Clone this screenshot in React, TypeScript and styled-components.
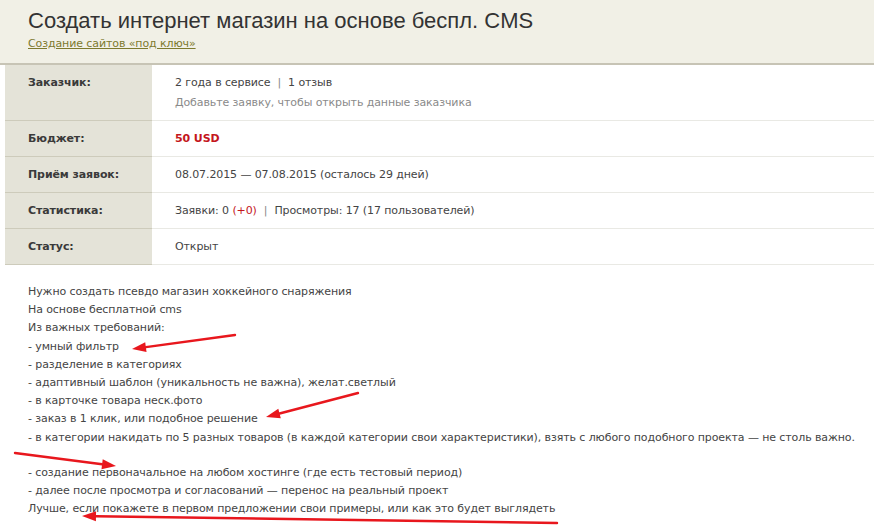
import React from "react";
import styled, { createGlobalStyle } from "styled-components";

const Global = createGlobalStyle`
  html, body { margin: 0; padding: 0; background: #ffffff; }
  body { font-family: "DejaVu Sans", Tahoma, sans-serif; font-size: 11px; letter-spacing: -0.1px; color: #444; }
`;

const Page = styled.div`
  position: relative;
  width: 874px;
  height: 530px;
  overflow: hidden;
  background: #ffffff;
`;

const Header = styled.header`
  background: #f1f0e6;
  border-bottom: 2px solid #c7c4b5;
  height: 65px;
  box-sizing: border-box;
  padding: 8px 28px 0;
`;

const Title = styled.h1`
  margin: 0;
  font-family: "Liberation Sans", Arial, sans-serif;
  font-weight: normal;
  font-size: 22px;
  line-height: 26px;
  letter-spacing: 0;
  color: #333;
`;

const CategoryLink = styled.a`
  display: inline-block;
  margin-top: 3px;
  color: #7d7a2e;
  text-decoration: underline;
  font-size: 11px;
  line-height: 14px;
`;

const Table = styled.div`
  margin-left: 5px;
  display: grid;
  grid-template-columns: 147px 1fr;
`;

const Label = styled.div<{ $h: number }>`
  height: ${(p) => p.$h}px;
  box-sizing: border-box;
  background: #e4e3d8;
  border-bottom: 1px solid #cdcbbb;
  padding: 10px 0 0 23px;
  font-weight: bold;
  color: #3a3a3a;
  line-height: 16px;
`;

const Value = styled.div<{ $h: number }>`
  height: ${(p) => p.$h}px;
  box-sizing: border-box;
  border-bottom: 1px solid #e9e9e4;
  padding: 8px 0 0 23px;
  line-height: 20px;
  color: #444;
`;

const Muted = styled.div`
  color: #8a8a8a;
`;

const Budget = styled.span`
  color: #c4161c;
  font-weight: bold;
`;

const Sep = styled.span`
  color: #888;
  margin: 0 7px;
`;

const Red = styled.span`
  color: #c4161c;
`;

const Description = styled.div`
  margin-left: 5px;
  padding: 18px 0 0 23px;
  line-height: 18.2px;
  color: #444;
`;

const Line = styled.div`
  white-space: pre;
  min-height: 18px;
`;

const Gap = styled.div`
  height: 17px;
`;

const Overlay = styled.svg`
  position: absolute;
  left: 0;
  top: 0;
  pointer-events: none;
`;

type ArrowProps = { x1: number; y1: number; x2: number; y2: number };

const Arrow = ({ x1, y1, x2, y2 }: ArrowProps) => {
  const ang = Math.atan2(y2 - y1, x2 - x1);
  const len = 14;
  const w = 5;
  const bx = x2 - Math.cos(ang) * len;
  const by = y2 - Math.sin(ang) * len;
  const px = -Math.sin(ang) * w;
  const py = Math.cos(ang) * w;
  return (
    <g>
      <line x1={x1} y1={y1} x2={bx} y2={by} stroke="#e8171d" strokeWidth={2.4} strokeLinecap="round" />
      <polygon points={`${x2},${y2} ${bx + px},${by + py} ${bx - px},${by - py}`} fill="#e8171d" />
    </g>
  );
};

const lines1 = [
  "Нужно создать псевдо магазин хоккейного снаряжения",
  "На основе бесплатной cms",
  "Из важных требований:",
  "- умный фильтр",
  "- разделение в категориях",
  "- адаптивный шаблон (уникальность не важна), желат.светлый",
  "- в карточке товара неск.фото",
  "- заказ в 1 клик, или подобное решение",
  "- в категории накидать по 5 разных товаров (в каждой категории свои характеристики), взять с любого подобного проекта — не столь важно.",
];

const lines2 = [
  "- создание первоначальное на любом хостинге (где есть тестовый период)",
  "- далее после просмотра и согласований — перенос на реальный проект",
  "Лучше, если покажете в первом предложении свои примеры, или как это будет выглядеть",
];

export default function App() {
  return (
    <Page>
      <Global />
      <Header>
        <Title>Создать интернет магазин на основе беспл. CMS</Title>
        <CategoryLink href="#">Создание сайтов «под ключ»</CategoryLink>
      </Header>
      <Table>
        <Label $h={56}>Заказчик:</Label>
        <Value $h={56}>
          <div>
            2 года в сервисе<Sep>|</Sep>1 отзыв
          </div>
          <Muted>Добавьте заявку, чтобы открыть данные заказчика</Muted>
        </Value>
        <Label $h={36}>Бюджет:</Label>
        <Value $h={36}>
          <Budget>50 USD</Budget>
        </Value>
        <Label $h={36}>Приём заявок:</Label>
        <Value $h={36}>08.07.2015 — 07.08.2015 (осталось 29 дней)</Value>
        <Label $h={36}>Статистика:</Label>
        <Value $h={36}>
          Заявки: 0 <Red>(+0)</Red>
          <Sep>|</Sep>Просмотры: 17 (17 пользователей)
        </Value>
        <Label $h={36}>Статус:</Label>
        <Value $h={36}>Открыт</Value>
      </Table>
      <Description>
        {lines1.map((l) => (
          <Line key={l}>{l}</Line>
        ))}
        <Gap />
        {lines2.map((l) => (
          <Line key={l}>{l}</Line>
        ))}
      </Description>
      <Overlay width={874} height={530} viewBox="0 0 874 530">
        <Arrow x1={235} y1={335} x2={132} y2={349} />
        <Arrow x1={358} y1={393} x2={266} y2={417} />
        <Arrow x1={15} y1={453} x2={116} y2={466} />
        <Arrow x1={557} y1={523} x2={82} y2={516} />
      </Overlay>
    </Page>
  );
}
